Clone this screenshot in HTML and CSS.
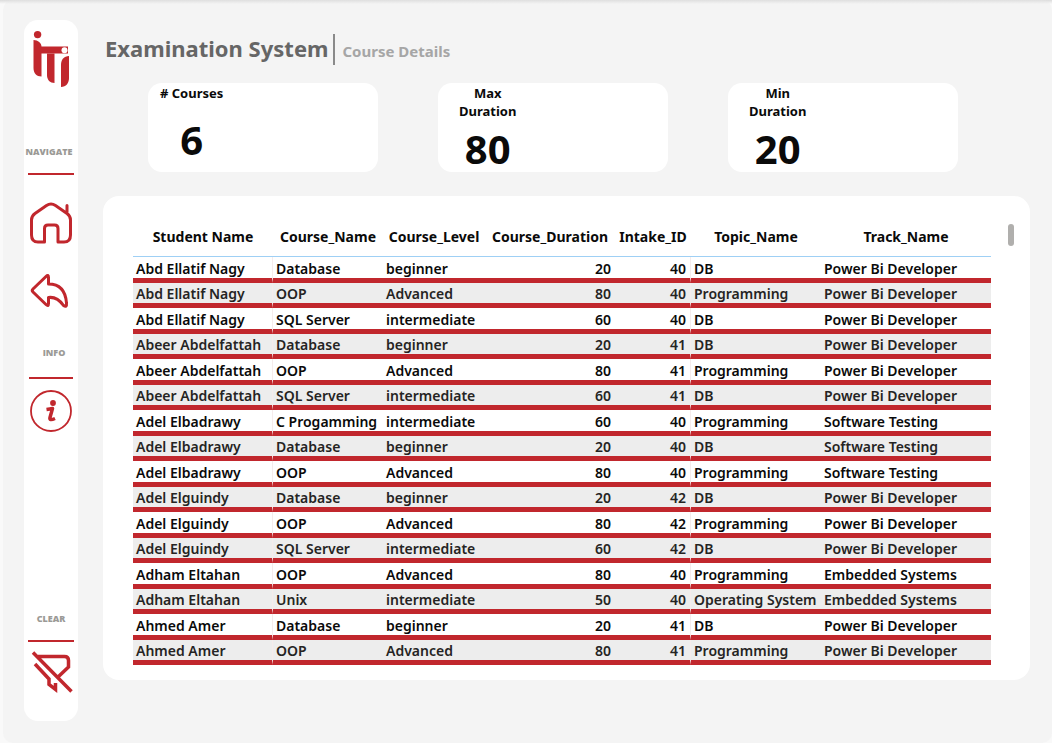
FILE: index.html
```html
<!DOCTYPE html>
<html lang="en">
<head>
<meta charset="utf-8">
<meta name="viewport" content="width=device-width, initial-scale=1">
<title>Examination System - Course Details</title>
<link rel="stylesheet" href="styles.css">
</head>
<body>
<div class="report">
  <nav class="sidebar" aria-label="Report">
    <svg class="logo" viewBox="0 0 54 80" role="img" aria-label="ITI">
      <g fill="#c1272d">
        <circle cx="13.600" cy="14.600" r="3.700"/>
        <path d="M9.500 20C14 20 17.500 23 17.500 26.500H44V33.500H17.500V56.500C12.500 56.500 9.500 53 9.500 48Z"/>
        <path d="M23 33.500H30.500V63C26 63 23 60 23 55Z"/>
        <path d="M45 36V58C45 63 42 67 37 67V45C37 39.500 40 36 45 36Z"/>
      </g>
      <circle cx="40.500" cy="30.300" r="3" fill="#fff"/>
    </svg>
    <h2 class="group-label group-label--navigate">NAVIGATE</h2>
    <div class="rule"></div>
    <a class="icon-link icon-link--home" href="#home" aria-label="Home">
      <svg class="icon" viewBox="0 0 44 44"><path d="M15.500 41H9Q2.500 41 2.500 34V19Q2.500 15 6 12.500L17.500 4.500Q22 1.500 26.500 4.500L38 12.500Q41.500 15 41.500 19V34Q41.500 41 35 41H29V27.500Q29 24 25.500 24H19Q15.500 24 15.500 27.500ZM38 11V4.500" stroke-linecap="round"/></svg>
    </a>
    <a class="icon-link icon-link--back" href="#back" aria-label="Back">
      <svg class="icon" viewBox="0 0 44 44"><path d="M19.500 14V7.500Q19.500 4 17 6.500L4 19Q2.500 20.500 4 22L17 34.500Q19.500 37 19.500 33.500V27.500C27 26.500 31 30.500 34.500 35.500Q38 38 37.500 33C36.500 20 30 14 19.500 14Z"/></svg>
    </a>
    <h2 class="group-label group-label--info">INFO</h2>
    <div class="rule rule--info"></div>
    <a class="icon-link icon-link--info" href="#info" aria-label="Information">
      <svg class="icon" viewBox="0 0 44 44"><circle cx="22" cy="22" r="20" stroke-width="1.800"/><circle cx="24" cy="14" r="2.900" fill="#c1272d" stroke="none"/><path d="M17.500 20.500Q21 20 23.500 19.500L21 28.500Q20 32 26 29.500" stroke-width="3.500"/></svg>
    </a>
    <h2 class="group-label group-label--clear">CLEAR</h2>
    <div class="rule"></div>
    <button class="icon-link icon-link--clear" type="button" aria-label="Clear filters">
      <svg class="icon" viewBox="0 0 44 44"><path d="M4 1.500L42.500 40.500M9 5.500H35.500Q39.500 5.500 39.500 9.500V16L29 26M6 13L20 28V33.500L26.500 38.500V32" stroke-width="3.500" stroke-linejoin="miter"/></svg>
    </button>
  </nav>

  <main class="content">
    <header class="heading">
      <h1 class="heading__title">Examination System</h1>
      <p class="heading__page">Course Details</p>
    </header>

    <section class="cards" aria-label="Summary">
      <div class="card card--count"><div class="metric"><h2 class="metric__label"># Courses</h2><p class="metric__value">6</p></div></div>
      <div class="card"><div class="metric"><h2 class="metric__label">Max Duration</h2><p class="metric__value">80</p></div></div>
      <div class="card"><div class="metric"><h2 class="metric__label">Min Duration</h2><p class="metric__value">20</p></div></div>
    </section>

    <section class="panel" aria-label="Courses by student">
      <table class="grid">
        <colgroup><col class="c-student"><col class="c-course"><col class="c-level"><col class="c-duration"><col class="c-intake"><col class="c-topic"><col class="c-track"></colgroup>
        <thead><tr><th>Student Name</th><th>Course_Name</th><th>Course_Level</th><th>Course_Duration</th><th>Intake_ID</th><th>Topic_Name</th><th>Track_Name</th></tr></thead>
        <tbody>
          <tr><td>Abd Ellatif Nagy</td><td>Database</td><td>beginner</td><td class="num">20</td><td class="num">40</td><td>DB</td><td>Power Bi Developer</td></tr>
          <tr><td>Abd Ellatif Nagy</td><td>OOP</td><td>Advanced</td><td class="num">80</td><td class="num">40</td><td>Programming</td><td>Power Bi Developer</td></tr>
          <tr><td>Abd Ellatif Nagy</td><td>SQL Server</td><td>intermediate</td><td class="num">60</td><td class="num">40</td><td>DB</td><td>Power Bi Developer</td></tr>
          <tr><td>Abeer Abdelfattah</td><td>Database</td><td>beginner</td><td class="num">20</td><td class="num">41</td><td>DB</td><td>Power Bi Developer</td></tr>
          <tr><td>Abeer Abdelfattah</td><td>OOP</td><td>Advanced</td><td class="num">80</td><td class="num">41</td><td>Programming</td><td>Power Bi Developer</td></tr>
          <tr><td>Abeer Abdelfattah</td><td>SQL Server</td><td>intermediate</td><td class="num">60</td><td class="num">41</td><td>DB</td><td>Power Bi Developer</td></tr>
          <tr><td>Adel Elbadrawy</td><td>C Progamming</td><td>intermediate</td><td class="num">60</td><td class="num">40</td><td>Programming</td><td>Software Testing</td></tr>
          <tr><td>Adel Elbadrawy</td><td>Database</td><td>beginner</td><td class="num">20</td><td class="num">40</td><td>DB</td><td>Software Testing</td></tr>
          <tr><td>Adel Elbadrawy</td><td>OOP</td><td>Advanced</td><td class="num">80</td><td class="num">40</td><td>Programming</td><td>Software Testing</td></tr>
          <tr><td>Adel Elguindy</td><td>Database</td><td>beginner</td><td class="num">20</td><td class="num">42</td><td>DB</td><td>Power Bi Developer</td></tr>
          <tr><td>Adel Elguindy</td><td>OOP</td><td>Advanced</td><td class="num">80</td><td class="num">42</td><td>Programming</td><td>Power Bi Developer</td></tr>
          <tr><td>Adel Elguindy</td><td>SQL Server</td><td>intermediate</td><td class="num">60</td><td class="num">42</td><td>DB</td><td>Power Bi Developer</td></tr>
          <tr><td>Adham Eltahan</td><td>OOP</td><td>Advanced</td><td class="num">80</td><td class="num">40</td><td>Programming</td><td>Embedded Systems</td></tr>
          <tr><td>Adham Eltahan</td><td>Unix</td><td>intermediate</td><td class="num">50</td><td class="num">40</td><td>Operating System</td><td>Embedded Systems</td></tr>
          <tr><td>Ahmed Amer</td><td>Database</td><td>beginner</td><td class="num">20</td><td class="num">41</td><td>DB</td><td>Power Bi Developer</td></tr>
          <tr><td>Ahmed Amer</td><td>OOP</td><td>Advanced</td><td class="num">80</td><td class="num">41</td><td>Programming</td><td>Power Bi Developer</td></tr>
        </tbody>
      </table>
      <div class="scroll-thumb"></div>
    </section>
  </main>
</div>
</body>
</html>
```
FILE: styles.css
```css
* { box-sizing: border-box; }

body {
  margin: 0;
  padding-left: 3px;
  background: linear-gradient(#dcdcdc, #f9f9f9 4px);
  font-family: "Noto Sans", "Open Sans", sans-serif;
  color: #0a0a0a;
}

h1, h2, p { margin: 0; }

.report {
  display: flex;
  gap: 25px;
  min-height: 100vh;
  padding: 20px 22px 22px 21px;
  border-radius: 10px;
  background: linear-gradient(#dfdfdf, #f4f4f4 4px);
}

/* Sidebar */
.sidebar {
  display: flex;
  flex-direction: column;
  align-items: center;
  flex: 0 0 54px;
  padding-bottom: 26px;
  border-radius: 14px;
  background: #fff;
}

.logo { display: block; width: 54px; height: 80px; }

.group-label {
  font-family: "Open Sans", "Noto Sans", sans-serif;
  font-size: 9px;
  line-height: 12px;
  font-weight: 800;
  color: #9b9a96;
}

.group-label--navigate { margin-top: 46px; padding-right: 4px; }
.group-label--info { margin-top: 33px; padding-left: 6px; }
.group-label--clear { margin-top: auto; }

.rule {
  flex: none;
  width: 46px;
  height: 2px;
  margin-top: 15px;
  background: #c1272d;
}

.rule--info { width: 44px; margin-top: 18px; }

.icon-link {
  display: block;
  width: 44px;
  height: 44px;
  padding: 0;
  border: 0;
  background: none;
  cursor: pointer;
}

.icon-link--home { margin-top: 26px; }
.icon-link--back { margin-top: 25px; }
.icon-link--info { margin-top: 10px; }
.icon-link--clear { margin-top: 9px; }

.icon {
  display: block;
  width: 44px;
  height: 44px;
  fill: none;
  stroke: #c1272d;
  stroke-width: 3;
  stroke-linejoin: round;
}

/* Content */
.content { flex: 1; min-width: 0; }

.heading {
  display: flex;
  align-items: center;
  height: 63px;
  padding: 0 2px 5px;
}

.heading__title {
  padding-right: 5px;
  padding-bottom: 2px;
  border-right: 2px solid #8a8a8a;
  font-size: 22px;
  line-height: 29px;
  font-weight: 700;
  color: #666;
}

.heading__page {
  padding: 4px 0 0 7px;
  font-size: 15px;
  line-height: 20px;
  font-weight: 700;
  color: #a6a6a6;
}

.cards {
  display: grid;
  grid-template-columns: repeat(3, 1fr);
  gap: 60px;
  padding: 0 72px 0 45px;
}

.card {
  height: 89px;
  padding: 1px 0 0 21px;
  border-radius: 14px;
  background: #fff;
}

.card--count { padding-left: 12px; }

.metric { width: min-content; text-align: center; }

.metric__label {
  font-size: 13px;
  line-height: 18px;
  font-weight: 700;
}

.metric__value {
  margin-top: 9px;
  font-size: 40px;
  line-height: 40px;
  font-weight: 700;
}

.card--count .metric__label { white-space: nowrap; }
.card--count .metric__value { margin-top: 18px; }

.panel {
  display: flex;
  align-items: flex-start;
  gap: 17px;
  margin-top: 24px;
  padding: 21px 16px 15px 30px;
  border-radius: 16px;
  background: #fff;
}

.scroll-thumb {
  flex: none;
  width: 6px;
  height: 22px;
  margin-top: 7px;
  border-radius: 3px;
  background: #b0afad;
}

/* Table */
.grid {
  flex: 1;
  width: 100%;
  table-layout: fixed;
  border-collapse: separate;
  border-spacing: 0;
  font-size: 14px;
  line-height: 18px;
  font-weight: 600;
  white-space: nowrap;
}

.c-student { width: 140px; }
.c-course { width: 110px; }
.c-level { width: 102px; }
.c-duration { width: 130px; }
.c-intake { width: 76px; }
.c-topic { width: 130px; }
.c-track { width: 170px; }

.grid th {
  height: 40px;
  padding: 0;
  border-bottom: 1px solid #9fd0f5;
  font-weight: 700;
  text-align: center;
}

.grid td {
  height: 26px;
  padding: 3px 4px 0 3px;
  border-bottom: 5px solid #c1272d;
  text-align: left;
}

.grid tbody tr:nth-child(even) td {
  height: 25px;
  padding-top: 2px;
  background: #ededed;
  color: #252423;
}

.grid td:first-child,
.grid td:nth-child(5) { border-right: 1px solid #f5ecec; }

.grid td.num { text-align: right; }
```
